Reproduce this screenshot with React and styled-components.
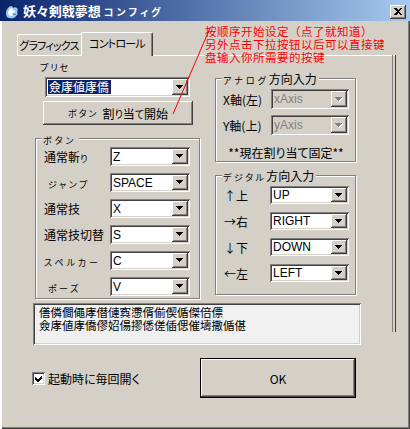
import styled, { createGlobalStyle, css } from 'styled-components'

const GlobalStyle = createGlobalStyle`
  html, body { margin: 0; padding: 0; background: #d4d0c8; }
  body {
    font-family: "Liberation Sans", "Noto Sans CJK JP", sans-serif;
    font-size: 12px;
    color: #000;
    font-feature-settings: "palt";
  }
  * { box-sizing: border-box; }
`

const raised = css`
  box-shadow: inset -1px -1px #404040, inset 1px 1px #ffffff,
    inset -2px -2px #808080, inset 2px 2px #d4d0c8;
`
const sunken = css`
  box-shadow: inset 1px 1px #808080, inset -1px -1px #ffffff,
    inset 2px 2px #404040, inset -2px -2px #d4d0c8;
`

const Window = styled.div`
  position: relative;
  width: 410px;
  height: 429px;
  background: #d4d0c8;
  overflow: hidden;
  box-shadow: inset 2px 0 #ffffff, inset 1px 0 #d4d0c8,
    inset -1px -1px #404040, inset -2px -2px #808080;
`

const TitleBar = styled.div`
  display: flex;
  align-items: center;
  height: 21px;
  padding: 2px 4px 0 4px;
  background: linear-gradient(to right, #0a246a, #a6caf0);
`
const TitleText = styled.div`
  margin-left: 3px;
  color: #fff;
  font-family: "Noto Sans CJK JP", sans-serif;
  font-weight: 700;
  font-size: 13px;
  line-height: 16px;
  white-space: nowrap;
`
const CloseButton = styled.div`
  margin-left: auto;
  width: 16px;
  height: 14px;
  display: flex;
  align-items: center;
  justify-content: center;
  background: #d4d0c8;
  ${raised}
`

const Client = styled.div`
  padding: 11px 0 0 17px;
`

const TabStrip = styled.div`
  position: relative;
  z-index: 1;
  display: flex;
  align-items: flex-end;
  height: 23px;
`
const Tab = styled.div`
  display: flex;
  align-items: center;
  justify-content: center;
  width: ${p => p.$width}px;
  height: ${p => (p.$active ? 24 : 21)}px;
  margin-left: ${p => (p.$active ? -2 : 0)}px;
  margin-bottom: ${p => (p.$active ? -1 : 0)}px;
  padding-bottom: ${p => (p.$active ? 3 : 0)}px;
  padding-right: ${p => (p.$active ? 0 : 2)}px;
  background: #d4d0c8;
  border-top: 1px solid #fff;
  border-left: 1px solid #fff;
  border-right: 1px solid #404040;
  border-radius: 2px 2px 0 0;
  box-shadow: inset -1px 0 #808080;
  font-family: "Noto Sans CJK JP", sans-serif;
  font-size: 11px;
  letter-spacing: -0.8px;
  white-space: nowrap;
`

const Panel = styled.div`
  position: relative;
  width: 379px;
  border-top: 1px solid #fff;
  padding-left: 18px;

  &::after {
    content: "";
    position: absolute;
    right: 0;
    top: -1px;
    width: 2px;
    height: 277px;
    border-left: 1px solid #808080;
    border-right: 1px solid #404040;
  }
`
const Columns = styled.div`
  display: flex;
  align-items: flex-start;
  gap: 15px;
`
const LeftColumn = styled.div`
  width: 165px;
  padding-top: 5px;
  display: flex;
  flex-direction: column;
  align-items: flex-start;
`
const RightColumn = styled.div`
  width: 141px;
  padding-top: 22px;
  display: flex;
  flex-direction: column;
`

const Kana = styled.span`
  font-family: "Noto Sans CJK JP", sans-serif;
  font-size: ${p => p.$size || 9}px;
  letter-spacing: ${p => (p.$spacing ?? 3)}px;
`
const PresetLabel = styled.div`
  margin-left: 5px;
  height: 12px;
  line-height: 12px;
`

const Field = styled.div`
  display: flex;
  width: ${p => p.$width}px;
  height: ${p => p.$height}px;
  margin-left: ${p => p.$offset || 0}px;
  margin-top: ${p => p.$top || 0}px;
  padding: 2px;
  background: ${p => (p.$disabled ? '#d4d0c8' : '#fff')};
  color: ${p => (p.$disabled ? '#808080' : '#000')};
  ${sunken}
`
const FieldText = styled.div`
  flex: 1;
  display: flex;
  align-items: center;
  padding-left: 1px;
  overflow: hidden;
  white-space: nowrap;
  font-size: 12px;
`
const Selection = styled.span`
  background: #0a246a;
  color: #fff;
  line-height: 14px;
  padding: 0 2px 0 1px;
  font-family: "Noto Sans CJK JP", sans-serif;
`
const DropButton = styled.div`
  width: 16px;
  display: flex;
  align-items: center;
  justify-content: center;
  background: #d4d0c8;
  ${raised}
`

const PushButton = styled.div`
  display: flex;
  align-items: center;
  justify-content: center;
  width: ${p => p.$width}px;
  height: ${p => p.$height}px;
  margin-left: ${p => p.$offset || 0}px;
  margin-top: ${p => p.$top || 0}px;
  background: #d4d0c8;
  font-family: "Noto Sans CJK JP", sans-serif;
  font-size: 12px;
  ${p => p.$default ? css`
    border: 1px solid #000;
    box-shadow: inset -1px -1px #404040, inset 1px 1px #ffffff,
      inset -2px -2px #808080, inset 2px 2px #d4d0c8;
  ` : raised}
`

const Group = styled.div`
  position: relative;
  width: ${p => p.$width}px;
  margin-top: ${p => p.$top || 0}px;
  padding: ${p => p.$padding};
  border: 1px solid #808080;
  box-shadow: inset 1px 1px #fff, 1px 1px #fff;
  display: flex;
  flex-direction: column;
  gap: ${p => p.$gap}px;
`
const Legend = styled.div`
  position: absolute;
  top: -7px;
  left: 6px;
  height: 13px;
  line-height: 13px;
  padding: 0 2px 0 1px;
  background: #d4d0c8;
  font-family: "Noto Sans CJK JP", sans-serif;
  font-size: 12px;
  white-space: nowrap;
`
const Row = styled.div`
  display: flex;
  align-items: center;
  justify-content: space-between;
  height: ${p => p.$height}px;
`
const RowLabel = styled.div`
  padding-left: ${p => p.$indent || 0}px;
  font-family: "Noto Sans CJK JP", sans-serif;
  font-size: 12px;
  white-space: nowrap;
`
const Note = styled.div`
  margin-top: 6px;
  line-height: 12px;
  text-align: center;
  font-family: "Noto Sans CJK JP", sans-serif;
  font-size: 12px;
`

const Memo = styled.div`
  width: 328px;
  height: 42px;
  margin: 4px 0 0 -2px;
  padding: 3px 0 0 6px;
  background: #f0f0f0;
  ${sunken}
  font-family: "Noto Sans CJK JP", sans-serif;
  font-size: 11.5px;
  line-height: 13px;
`

const Footer = styled.div`
  display: flex;
  align-items: center;
  margin-top: 13px;
`
const CheckLabel = styled.div`
  display: flex;
  align-items: center;
  gap: 3px;
  width: 183px;
  padding-left: 15px;
  font-family: "Noto Sans CJK JP", sans-serif;
  font-size: 12px;
`
const CheckBox = styled.div`
  width: 13px;
  height: 13px;
  display: flex;
  align-items: center;
  justify-content: center;
  background: #fff;
  ${sunken}
`

const Annotation = styled.div`
  position: absolute;
  left: 205px;
  top: 25px;
  color: #ff0000;
  font-family: "Noto Sans CJK SC", sans-serif;
  font-size: 11.5px;
  line-height: 13px;
  letter-spacing: 0.5px;
  white-space: nowrap;
  font-feature-settings: normal;
`
const Pointer = styled.svg`
  position: absolute;
  left: 0;
  top: 0;
  pointer-events: none;
`

function Arrow({ disabled }) {
  return (
    <svg width="8" height="5" viewBox="0 0 8 5" shapeRendering="crispEdges">
      {disabled && <polygon points="1,1 8,1 4.5,5" fill="#fff" />}
      <polygon points="0,0 7,0 3.5,4" fill={disabled ? '#808080' : '#000'} />
    </svg>
  )
}

function Combo({ value, width, height = 19, disabled, selected, offset, top }) {
  return (
    <Field $width={width} $height={height} $disabled={disabled} $offset={offset} $top={top}>
      <FieldText>{selected ? <Selection>{value}</Selection> : value}</FieldText>
      <DropButton>
        <Arrow disabled={disabled} />
      </DropButton>
    </Field>
  )
}

function AppIcon() {
  return (
    <svg width="16" height="16" viewBox="0 0 16 16">
      <path d="M2 9c0-3 2-6 5-7 1 0 2 1 2 2 1-1 3-1 4 0 1 1 1 3 0 4 1 1 1 3-1 4-1 2-4 3-6 2-3 0-4-2-4-5z" fill="#9cc8ec" />
      <path d="M4 8c1-2 2-4 4-4 1 1 1 2 0 3 2-1 3 0 3 1-1 1-2 1-3 1 1 1 1 2 0 3-2 0-4-1-4-4z" fill="#ffffff" />
      <path d="M9 10c1 0 2 1 3 0" stroke="#3a6ea8" strokeWidth="1" fill="none" />
    </svg>
  )
}

const buttons = [
  { label: <>通常斬<Kana $spacing={0}>り</Kana></>, value: 'Z' },
  { label: <Kana $spacing={2.5}>ジャンプ</Kana>, value: 'SPACE', indent: 4 },
  { label: '通常技', value: 'X' },
  { label: '通常技切替', value: 'S', indent: -1 },
  { label: <Kana $spacing={3}>スペルカー</Kana>, value: 'C', indent: -1 },
  { label: <Kana $spacing={2.5}>ポーズ</Kana>, value: 'V', indent: 4 },
]

const directions = [
  { label: '↑上', value: 'UP' },
  { label: '→右', value: 'RIGHT' },
  { label: '↓下', value: 'DOWN' },
  { label: '←左', value: 'LEFT' },
]

export default function App() {
  return (
    <>
      <GlobalStyle />
      <Window>
        <TitleBar>
          <AppIcon />
          <TitleText>
            妖々剣戟夢想<Kana $size={10} $spacing={3} style={{ marginLeft: 3 }}>コンフィグ</Kana>
          </TitleText>
          <CloseButton>
            <svg width="8" height="7" viewBox="0 0 8 7" shapeRendering="crispEdges">
              <path d="M0 0h2l2 2 2-2h2L5 3.5 8 7H6L4 5 2 7H0l3-3.5z" fill="#000" />
            </svg>
          </CloseButton>
        </TitleBar>

        <Client>
          <TabStrip>
            <Tab $width={66}>グラフィックス</Tab>
            <Tab $width={72} $active>コントロール</Tab>
          </TabStrip>

          <Panel>
            <Columns>
              <LeftColumn>
                <PresetLabel><Kana $spacing={2}>プリセ</Kana></PresetLabel>
                <Combo value="僉庨値庨僑" width={145} height={20} selected offset={10} top={4} />
                <PushButton $width={150} $height={24} $offset={8} $top={4}>
                  <Kana $spacing={2} style={{ marginRight: 4 }}>ボタン</Kana>割<Kana $spacing={0} $size={10}>り</Kana>当<Kana $spacing={0} $size={10}>て</Kana>開始
                </PushButton>
                <Group $width={165} $top={13} $padding="8px 9px 2px 8px" $gap={7}>
                  <Legend><Kana>ボタン</Kana></Legend>
                  {buttons.map(b => (
                    <Row key={b.value} $height={19}>
                      <RowLabel $indent={b.indent}>{b.label}</RowLabel>
                      <Combo value={b.value} width={80} height={19} />
                    </Row>
                  ))}
                </Group>
              </LeftColumn>

              <RightColumn>
                <Group $width={141} $padding="10px 6px 2px 7px" $gap={6}>
                  <Legend><Kana $spacing={3}>アナログ</Kana>方向入力</Legend>
                  <Row $height={20}>
                    <RowLabel>X軸(左)</RowLabel>
                    <Combo value="xAxis" width={78} height={20} disabled />
                  </Row>
                  <Row $height={20}>
                    <RowLabel>Y軸(上)</RowLabel>
                    <Combo value="yAxis" width={78} height={20} disabled />
                  </Row>
                  <Note>**現在割り当て固定**</Note>
                </Group>
                <Group $width={141} $top={13} $padding="10px 6px 12px 7px" $gap={8}>
                  <Legend><Kana $spacing={2.5}>デジタル</Kana>方向入力</Legend>
                  {directions.map(d => (
                    <Row key={d.value} $height={18}>
                      <RowLabel $indent={1}>{d.label}</RowLabel>
                      <Combo value={d.value} width={79} height={18} />
                    </Row>
                  ))}
                </Group>
              </RightColumn>
            </Columns>

            <Memo>
              <div>僐僯僴僶庨僣僆寏懘偦偂偰偱傑倍僄</div>
              <div>僉庨値庨僑僇妱偒摎僁傞偛偲催壔撒偱偡</div>
            </Memo>
          </Panel>

          <Footer>
            <CheckLabel>
              <CheckBox>
                <svg width="9" height="9" viewBox="0 0 9 9" shapeRendering="crispEdges">
                  <path d="M1 3v3l2 2h1l4-4V1L3.5 5.5z" fill="#000" />
                </svg>
              </CheckBox>
              起動時に毎回開く
            </CheckLabel>
            <PushButton $width={156} $height={40} $default>OK</PushButton>
          </Footer>
        </Client>

        <Annotation>
          <div>按顺序开始设定（点了就知道）</div>
          <div>另外点击下拉按钮以后可以直接键</div>
          <div>盘输入你所需要的按键</div>
        </Annotation>
        <Pointer width="410" height="429">
          <line x1="210" y1="28" x2="173" y2="114" stroke="#ff0000" strokeWidth="1" />
        </Pointer>
      </Window>
    </>
  )
}
